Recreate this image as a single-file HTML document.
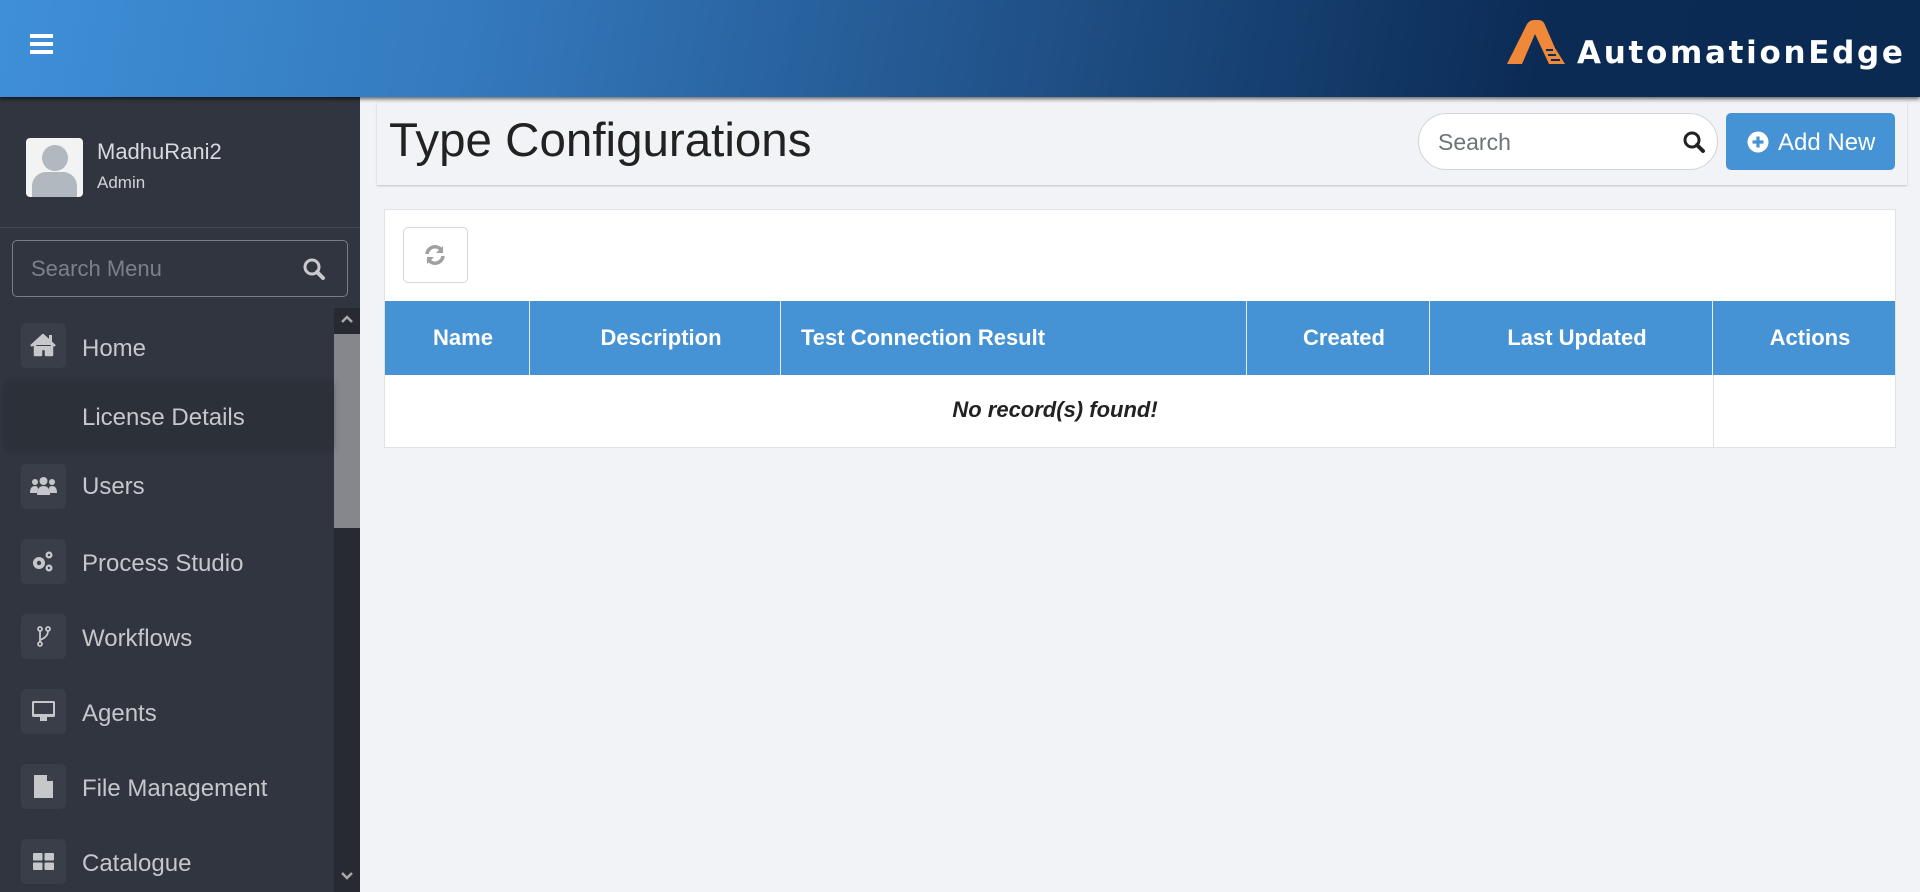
<!DOCTYPE html>
<html><head><meta charset="utf-8"><style>
*{box-sizing:border-box;margin:0;padding:0}
body{width:1920px;height:892px;overflow:hidden;font-family:"Liberation Sans",Arial,sans-serif;background:#f2f3f7;position:relative}
.hdr{position:absolute;left:0;top:0;width:1920px;height:97px;background:linear-gradient(100deg,#3f8fd8 0%,#3479bd 25%,#1f4f85 55%,#0b2b55 80%,#0a2a52 100%);box-shadow:0 2px 4px rgba(0,0,0,.6);z-index:5}
.hb{position:absolute;left:30px;width:23px;height:4px;background:#fff}
.side{position:absolute;left:0;top:97px;width:360px;height:795px;background:#31353f}
.abs{position:absolute}
.mi{position:absolute;left:21px;width:45px;height:45px;background:#3a3e48;border-radius:5px}
.mt{position:absolute;left:82px;font-size:24px;color:#c5c7cb}
.th{position:absolute;top:301px;height:74px;background:#4592d5;color:#fff;font-weight:bold;font-size:22px;display:flex;align-items:center;justify-content:center;border-right:1px solid #e8eef5;padding-left:12px}
</style></head><body>
<div class="hdr">
 <div class="hb" style="top:34px"></div><div class="hb" style="top:42px"></div><div class="hb" style="top:50px"></div>
 <svg class="abs" style="left:1505px;top:20px" width="65" height="45" viewBox="0 0 65 45"><path d="M2 44 L22 4 Q25 0 29 0 L34 0 Q38 0 40 5 L50 28 L60 44 L44 44 L30 14 L17 44 Z" fill="#f0883a"/><path d="M41 30 L48 30 M43 35 L51 35 M46 40 L55 40" stroke="#0b2b55" stroke-width="2"/></svg>
 <div class="abs" style="left:1577px;top:35px;color:#fff;font-size:31px;font-weight:bold;letter-spacing:2.7px;font-family:'DejaVu Sans',sans-serif">AutomationEdge</div>
</div>
<div class="side">
 <div class="abs" style="left:26px;top:41px;width:57px;height:59px;background:#f3f3f3;border-radius:4px;overflow:hidden">
  <div class="abs" style="left:16px;top:7px;width:26px;height:26px;border-radius:50%;background:#b1b8c0"></div>
  <div class="abs" style="left:6px;top:34px;width:45px;height:30px;border-radius:14px 14px 3px 3px;background:#b1b8c0"></div>
 </div>
 <div class="abs" style="left:97px;top:42px;font-size:22px;color:#d8dade">MadhuRani2</div>
 <div class="abs" style="left:97px;top:76px;font-size:17px;color:#d0d2d6">Admin</div>
 <div class="abs" style="left:0;top:130px;width:360px;height:1px;background:#464a55"></div>
 <div class="abs" style="left:12px;top:143px;width:336px;height:57px;border:1px solid #7a7e87;border-radius:5px"></div>
 <div class="abs" style="left:31px;top:159px;font-size:22px;color:#7b8089">Search Menu</div>
 <svg class="abs" style="left:302px;top:160px" width="24" height="24" viewBox="0 0 24 24"><circle cx="10" cy="10" r="7" fill="none" stroke="#c8cacd" stroke-width="3"/><path d="M15 15 L21 21" stroke="#c8cacd" stroke-width="4" stroke-linecap="round"/></svg>
 <div class="abs" style="left:334px;top:211px;width:26px;height:584px;background:#272a31"></div>
 <div class="abs" style="left:334px;top:237px;width:26px;height:194px;background:#85878c"></div>
 <svg class="abs" style="left:339px;top:215px" width="16" height="14"><path d="M3 10 L8 5 L13 10" stroke="#aaa" stroke-width="2.5" fill="none"/></svg>
 <svg class="abs" style="left:339px;top:772px" width="16" height="14"><path d="M3 4 L8 9 L13 4" stroke="#aaa" stroke-width="2.5" fill="none"/></svg>
 <div class="abs" style="left:6px;top:286px;width:328px;height:66px;background:#2c3038;box-shadow:0 0 6px rgba(0,0,0,.25)"></div>
 <div class="mt" style="top:307px">License Details</div>
 <div class="mi" style="top:226px"><svg width="45" height="45" viewBox="0 0 45 45"><path d="M10 23 L22 12 L34 23 M14 22 V32 H20 V26 H25 V32 H31 V22" fill="#c5c7cb" stroke="#c5c7cb" stroke-width="2.5" stroke-linejoin="round"/><rect x="28" y="12" width="3" height="7" fill="#c5c7cb"/></svg></div>
 <div class="mt" style="top:238px">Home</div>
 <div class="mi" style="top:367px"><svg width="45" height="45" viewBox="0 0 45 45" fill="#c5c7cb"><circle cx="22.5" cy="17" r="4"/><circle cx="14" cy="18" r="3"/><circle cx="31" cy="18" r="3"/><path d="M16 31 Q16 22 22.5 22 Q29 22 29 31Z"/><path d="M9 29 Q9 22 14 22 Q17 22 17 25 L16 29Z M36 29 Q36 22 31 22 Q28 22 28 25 L29 29Z"/></svg></div>
 <div class="mt" style="top:376px">Users</div>
 <div class="mi" style="top:442px"><svg width="45" height="45" viewBox="0 0 45 45" fill="#c5c7cb"><circle cx="18" cy="24" r="6"/><circle cx="18" cy="24" r="2.2" fill="#3a3e48"/><circle cx="28" cy="16" r="3.5"/><circle cx="28" cy="16" r="1.2" fill="#3a3e48"/><circle cx="28" cy="29" r="3.5"/><circle cx="28" cy="29" r="1.2" fill="#3a3e48"/></svg></div>
 <div class="mt" style="top:453px">Process Studio</div>
 <div class="mi" style="top:517px"><svg width="45" height="45" viewBox="0 0 45 45" fill="none" stroke="#c5c7cb" stroke-width="1.8"><circle cx="19" cy="15" r="2"/><circle cx="19" cy="30" r="2"/><circle cx="27" cy="15" r="2"/><path d="M19 17 V28 M27 17 Q27 23 19 26"/></svg></div>
 <div class="mt" style="top:528px">Workflows</div>
 <div class="mi" style="top:592px"><svg width="45" height="45" viewBox="0 0 45 45" fill="#c5c7cb"><rect x="11" y="12" width="23" height="16" rx="1.5"/><rect x="13" y="14" width="19" height="11" fill="#3a3e48"/><rect x="19" y="28" width="7" height="4"/></svg></div>
 <div class="mt" style="top:603px">Agents</div>
 <div class="mi" style="top:667px"><svg width="45" height="45" viewBox="0 0 45 45" fill="#c5c7cb"><path d="M13 11 H26 L32 17 V34 H13Z"/><path d="M26 11 V17 H32" fill="#3a3e48"/></svg></div>
 <div class="mt" style="top:678px">File Management</div>
 <div class="mi" style="top:742px"><svg width="45" height="45" viewBox="0 0 45 45" fill="#c5c7cb"><rect x="12" y="14" width="9.5" height="7.5" rx="1"/><rect x="23.5" y="14" width="9.5" height="7.5" rx="1"/><rect x="12" y="23.5" width="9.5" height="7.5" rx="1"/><rect x="23.5" y="23.5" width="9.5" height="7.5" rx="1"/></svg></div>
 <div class="mt" style="top:753px">Catalogue</div>
</div>
<div class="abs" style="left:377px;top:102px;width:1530px;height:83px;background:#f2f3f7;box-shadow:0 1px 2px rgba(0,0,0,.2)"></div>
<div class="abs" style="left:389px;top:113px;font-size:47.5px;color:#222">Type Configurations</div>
<div class="abs" style="left:1418px;top:113px;width:300px;height:57px;background:#fff;border:1px solid #d0d3d8;border-radius:29px"></div>
<div class="abs" style="left:1438px;top:129px;font-size:23px;color:#6c737b">Search</div>
<svg class="abs" style="left:1682px;top:130px" width="24" height="24" viewBox="0 0 24 24"><circle cx="10" cy="10" r="7" fill="none" stroke="#222" stroke-width="3"/><path d="M15 15 L21 21" stroke="#222" stroke-width="4" stroke-linecap="round"/></svg>
<div class="abs" style="left:1726px;top:113px;width:169px;height:57px;background:#4592d5;border-radius:5px"></div>
<svg class="abs" style="left:1747px;top:131px" width="22" height="22" viewBox="0 0 22 22"><circle cx="11" cy="11" r="10.5" fill="#fff"/><path d="M11 5.5 V16.5 M5.5 11 H16.5" stroke="#4592d5" stroke-width="3.2"/></svg>
<div class="abs" style="left:1778px;top:129px;font-size:24px;color:#fff">Add New</div>
<div class="abs" style="left:384px;top:209px;width:1512px;height:239px;background:#fff;border:1px solid #dfe2e6"></div>
<div class="abs" style="left:403px;top:227px;width:65px;height:56px;border:1px solid #d5d7da;border-radius:5px"></div>
<svg class="abs" style="left:423px;top:244px" width="24" height="22" viewBox="0 0 24 22" fill="none" stroke="#a0a0a0" stroke-width="3.5"><path d="M4 10 A8 8 0 0 1 19 7"/><path d="M20 12 A8 8 0 0 1 5 15"/><path d="M20 2 V9 H13" fill="#a0a0a0" stroke-width="0"/><path d="M4 20 V13 H11" fill="#a0a0a0" stroke-width="0"/></svg>
<div class="th" style="left:385px;width:145px">Name</div>
<div class="th" style="left:530px;width:251px">Description</div>
<div class="th" style="left:781px;width:466px;justify-content:flex-start;padding-left:20px">Test Connection Result</div>
<div class="th" style="left:1247px;width:183px">Created</div>
<div class="th" style="left:1430px;width:283px">Last Updated</div>
<div class="th" style="left:1713px;width:182px;border-right:none">Actions</div>
<div class="abs" style="left:1713px;top:375px;width:1px;height:72px;background:#dfe2e6"></div>
<div class="abs" style="left:391px;top:397px;width:1328px;text-align:center;font-size:22px;font-weight:bold;font-style:italic;color:#222">No record(s) found!</div>
</body></html>
